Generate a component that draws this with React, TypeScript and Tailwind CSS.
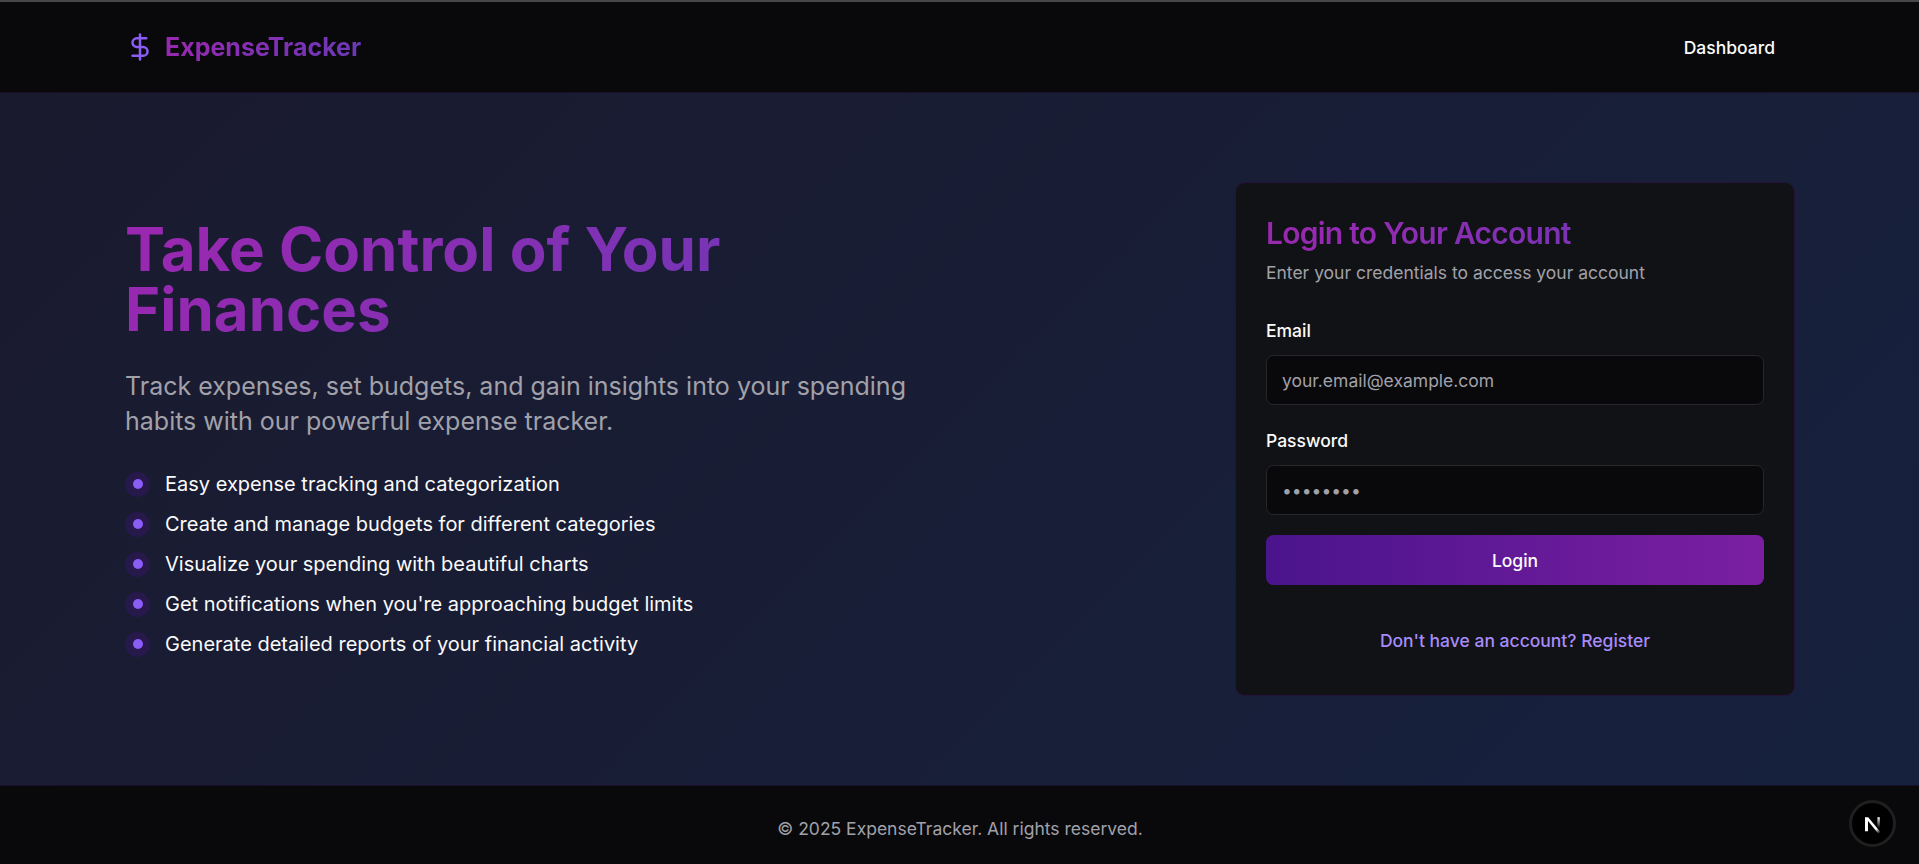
import React from 'react';
import { DollarSign } from 'lucide-react';

const features = [
  'Easy expense tracking and categorization',
  'Create and manage budgets for different categories',
  'Visualize your spending with beautiful charts',
  "Get notifications when you're approaching budget limits",
  'Generate detailed reports of your financial activity',
];

const gradientText =
  'bg-[linear-gradient(135deg,#9c27b0_0%,#673ab7_100%)] bg-clip-text text-transparent';

function Header() {
  return (
    <header className="h-[93px] shrink-0 border-t-2 border-b border-t-[#48484a] border-b-[#1c0d28] bg-[#09090b]">
      <div className="mx-auto flex h-full max-w-[1749px] items-center justify-between px-10">
        <a href="#" className="flex items-center gap-[10px]">
          <DollarSign className="size-[30px] text-[#8b5cf6]" strokeWidth={2} />
          <span className={`text-[25px] leading-[35px] font-bold ${gradientText}`}>ExpenseTracker</span>
        </a>
        <a href="#" className="pr-[19px] text-[17.5px] leading-[25px] font-medium">
          Dashboard
        </a>
      </div>
    </header>
  );
}

function Hero() {
  return (
    <div className="flex flex-col pb-[2px]">
      <h1 className={`text-[60px] leading-[60px] font-bold ${gradientText}`}>
        Take Control of Your Finances
      </h1>
      <p className="mt-[30px] text-[25px] leading-[35px] text-[#a1a1aa]">
        Track expenses, set budgets, and gain insights into your spending habits with our powerful expense tracker.
      </p>
      <ul className="mt-[33px] flex flex-col gap-[15px]">
        {features.map((feature) => (
          <li key={feature} className="flex h-[25px] items-center gap-[15px]">
            <span className="flex size-[25px] items-center justify-center rounded-full bg-[#4a148c]/30">
              <span className="mb-px size-[10px] rounded-full bg-[#8b5cf6]" />
            </span>
            <span className="text-[20px] leading-[25px]">{feature}</span>
          </li>
        ))}
      </ul>
    </div>
  );
}

interface FieldProps {
  id: string;
  label: string;
  type: string;
  placeholder: string;
}

function Field({ id, label, type, placeholder }: FieldProps) {
  return (
    <div className="flex flex-col gap-[15px]">
      <label htmlFor={id} className="text-[17.5px] leading-[18px] font-medium">
        {label}
      </label>
      <input
        id={id}
        type={type}
        placeholder={placeholder}
        className={`h-[50px] w-full rounded-[7.5px] border border-[#27272a] bg-[#09090b] px-[15px] text-[17.5px] leading-[25px] outline-none placeholder:text-[#a1a1aa] ${type === 'password' ? 'pt-px' : ''}`}
      />
    </div>
  );
}

function LoginCard() {
  return (
    <form className="-mr-px flex h-[514px] w-[560px] flex-col justify-self-end rounded-[10px] border border-[#26123a] bg-[#111215] px-[30px] pt-[31px]">
      <h2 className={`text-[30px] leading-[38px] font-semibold tracking-[-0.025em] ${gradientText}`}>
        Login to Your Account
      </h2>
      <p className="mt-[8px] text-[17.5px] leading-[25px] text-[#a1a1aa]">
        Enter your credentials to access your account
      </p>
      <div className="mt-[37px] flex flex-col gap-[27px]">
        <Field id="email" label="Email" type="email" placeholder="your.email@example.com" />
        <Field id="password" label="Password" type="password" placeholder="••••••••" />
      </div>
      <button
        type="button"
        className="mt-5 h-[50px] shrink-0 rounded-[7.5px] bg-[linear-gradient(90deg,#4a148c_0%,#7b1fa2_100%)] pt-px text-[17.5px] leading-[25px] font-medium"
      >
        Login
      </button>
      <a href="#" className="mt-[43px] text-center text-[17.5px] leading-[25px] font-medium text-[#a78bfa]">
        Don't have an account? Register
      </a>
    </form>
  );
}

export default function App() {
  return (
    <div className="flex h-[864px] flex-col overflow-hidden bg-[#09090b] font-['Inter',sans-serif] text-[#fafafa]">
      <Header />
      <main className="flex h-[692px] shrink-0 items-center bg-[linear-gradient(135deg,#1a1a2e_0%,#16213e_100%)]">
        <div className="mx-auto grid w-full max-w-[1749px] grid-cols-2 items-center gap-[60px] px-10">
          <Hero />
          <LoginCard />
        </div>
      </main>
      <footer className="flex flex-1 justify-center border-t border-[#190e2a] pt-[30px] pl-px">
        <p className="text-[17.5px] leading-[26px] text-[#a1a1aa]">© 2025 ExpenseTracker. All rights reserved.</p>
      </footer>
      <div className="fixed right-[23px] bottom-[17px] flex size-[47px] items-center justify-center rounded-full border-[3px] border-[#1f1f1f] bg-black">
        <svg width="18" height="20" viewBox="0 0 18 20" fill="none">
          <defs>
            <linearGradient id="diag" x1="9" y1="10" x2="16" y2="19" gradientUnits="userSpaceOnUse">
              <stop stopColor="#fff" />
              <stop offset="0.5" stopColor="#fff" />
              <stop offset="1" stopColor="#fff" stopOpacity="0" />
            </linearGradient>
            <linearGradient id="stem" x1="14" y1="3" x2="14" y2="14" gradientUnits="userSpaceOnUse">
              <stop stopColor="#fff" />
              <stop offset="1" stopColor="#fff" stopOpacity="0" />
            </linearGradient>
          </defs>
          <path d="M1 17.200V3.200H4.200L17 18.800L14.800 20.200L4 7V17.200Z" fill="url(#diag)" />
          <rect x="13.400" y="3.200" width="2.400" height="11.500" fill="url(#stem)" />
        </svg>
      </div>
    </div>
  );
}
